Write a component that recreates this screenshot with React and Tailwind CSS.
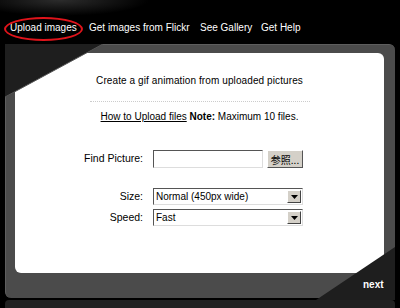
const navItems = [
  { label: 'Upload images', w: 'w-[79px]' },
  { label: 'Get images from Flickr', w: 'w-[111px]' },
  { label: 'See Gallery', w: 'w-[61px]' },
  { label: 'Get Help', w: '' },
];

function Select({ value }) {
  return (
    <div className="flex items-center w-[150px] h-[17px] bg-white border border-t-[#555] border-l-[#555] border-b-[#ddd] border-r-[#ddd]">
      <span className="flex-1 pl-[2px] text-[10px] leading-none text-black">{value}</span>
      <span className="w-[14px] h-[13px] mr-[1px] bg-[#d4d0c8] border border-t-white border-l-white border-b-[#444] border-r-[#444] flex items-center justify-center">
        <svg width="7" height="4" viewBox="0 0 7 4">
          <path d="M0 0h7L3.5 4z" fill="#000" />
        </svg>
      </span>
    </div>
  );
}

export default function App() {
  return (
    <div className="relative w-[400px] h-[308px] bg-black overflow-hidden font-['Liberation_Sans',Arial,sans-serif]">
      {/* faded logo glow behind nav */}
      <div className="absolute left-0 top-0 w-[150px] h-[16px] bg-[radial-gradient(ellipse_at_40%_0%,#2c2c2c,transparent_70%)]" />

      <nav className="relative flex pl-[10px] pt-[22px] h-[44px] text-[10px] leading-[12px] text-white">
        {navItems.map((n) => (
          <span key={n.label} className={n.w}>{n.label}</span>
        ))}
      </nav>
      <div className="absolute left-[4px] top-[17px] w-[79px] h-[24px] rounded-[50%] border-2 border-[#e0141b]" />

      {/* gray frame */}
      <div className="ml-[5px] w-[390px] h-[254px] rounded-[6px] bg-[#4b4b4b] border-l border-t border-[#5e5e5e] pl-[9px] pt-[8px]">
        <div className="w-[369px] h-[220px] rounded-[6px] bg-white pt-[20px] text-[10.5px] text-black">
          <p className="mt-[1px] text-center leading-[13px] text-[10px] tracking-[0.1px]">
            Create a gif animation from uploaded pictures
          </p>
          <div className="mx-auto mt-[14px] w-[220px] border-t border-dotted border-[#ccc]" />
          <p className="mt-[8px] text-center leading-[13px] text-[10px]">
            <span className="underline">How to Upload files</span> <b>Note:</b> Maximum 10 files.
          </p>

          <div className="mt-[27px] grid grid-cols-[128px_auto] gap-x-[10px] items-center">
            <span className="text-right">Find Picture:</span>
            <div className="flex items-center gap-[4px]">
              <div className="w-[110px] h-[18px] bg-white border border-t-[#555] border-l-[#555] border-b-[#ddd] border-r-[#ddd]" />
              <div className="w-[36px] h-[18px] bg-[#d4d0c8] border border-t-white border-l-white border-b-[#555] border-r-[#555] flex items-center justify-center text-[10px] font-['Noto_Sans_CJK_JP',sans-serif]">
                参照...
              </div>
            </div>
          </div>

          <div className="mt-[20px] grid grid-cols-[128px_auto] gap-x-[10px] gap-y-[4px] items-center">
            <span className="text-right">Size:</span>
            <Select value="Normal (450px wide)" />
            <span className="text-right">Speed:</span>
            <Select value="Fast" />
          </div>
        </div>
      </div>

      <div className="mt-[2px] ml-[5px] w-[390px] h-[10px] rounded-t-[4px] bg-[#222]" />

      {/* corner triangles */}
      <svg className="absolute left-[5px] top-[44px]" width="100" height="54" viewBox="0 0 100 54">
        <path d="M0 0H98L0 53z" fill="#1e1e1e" />
        <path d="M98 0L0 53" stroke="#555" strokeWidth="1" />
      </svg>
      <svg className="absolute left-[316px] top-[247px]" width="80" height="54" viewBox="0 0 80 54">
        <path d="M0 53L79 0V53z" fill="#1e1e1e" />
      </svg>
      <span className="absolute left-[363px] top-[279px] text-[10px] font-bold text-white leading-[12px]">next</span>
    </div>
  );
}
